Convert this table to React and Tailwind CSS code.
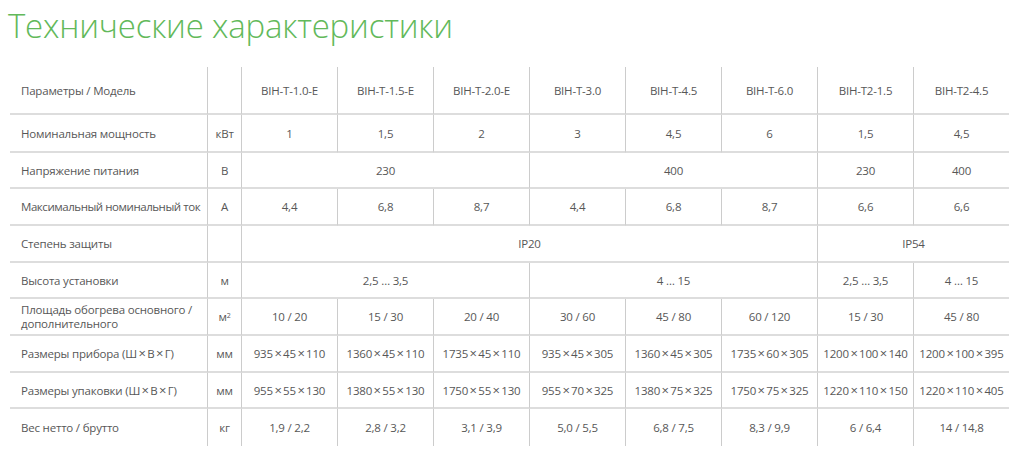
import React from 'react';

const models = ['BIH-T-1.0-E', 'BIH-T-1.5-E', 'BIH-T-2.0-E', 'BIH-T-3.0', 'BIH-T-4.5', 'BIH-T-6.0', 'BIH-T2-1.5', 'BIH-T2-4.5'];

const X = () => <span className="text-[13px] px-[1.5px]">×</span>;
const dims = (a, b, c) => <>{a}<X />{b}<X />{c}</>;

// each value: [text, colSpan]
const rows = [
  { label: 'Номинальная мощность', unit: 'кВт', cells: [['1'], ['1,5'], ['2'], ['3'], ['4,5'], ['6'], ['1,5'], ['4,5']] },
  { label: 'Напряжение питания', unit: 'В', cells: [['230', 3], ['400', 3], ['230'], ['400']] },
  { label: 'Максимальный номинальный ток', tight: true, unit: 'А', cells: [['4,4'], ['6,8'], ['8,7'], ['4,4'], ['6,8'], ['8,7'], ['6,6'], ['6,6']] },
  { label: 'Степень защиты', unit: '', cells: [['IP20', 6], ['IP54', 2]] },
  { label: 'Высота установки', unit: 'м', cells: [['2,5 … 3,5', 3], ['4 … 15', 3], ['2,5 … 3,5'], ['4 … 15']] },
  { label: <span className="leading-[14px]">Площадь обогрева основного /<br />дополнительного</span>, unit: 'м²', cells: [['10 / 20'], ['15 / 30'], ['20 / 40'], ['30 / 60'], ['45 / 80'], ['60 / 120'], ['15 / 30'], ['45 / 80']] },
  { label: <>Размеры прибора (Ш<X />В<X />Г)</>, unit: 'мм', cells: [[dims(935, 45, 110)], [dims(1360, 45, 110)], [dims(1735, 45, 110)], [dims(935, 45, 305)], [dims(1360, 45, 305)], [dims(1735, 60, 305)], [dims(1200, 100, 140)], [dims(1200, 100, 395)]] },
  { label: <>Размеры упаковки (Ш<X />В<X />Г)</>, unit: 'мм', cells: [[dims(955, 55, 130)], [dims(1380, 55, 130)], [dims(1750, 55, 130)], [dims(955, 70, 325)], [dims(1380, 75, 325)], [dims(1750, 75, 325)], [dims(1220, 110, 150)], [dims(1220, 110, 405)]] },
  { label: 'Вес нетто / брутто', unit: 'кг', cells: [['1,9 / 2,2'], ['2,8 / 3,2'], ['3,1 / 3,9'], ['5,0 / 5,5'], ['6,8 / 7,5'], ['8,3 / 9,9'], ['6 / 6,4'], ['14 / 14,8']] },
];

const spanCls = { 1: 'col-span-1', 2: 'col-span-2', 3: 'col-span-3', 6: 'col-span-6' };

export default function App() {
  return (
    <div className="w-[1024px] h-[472px] bg-white text-[#575757] overflow-hidden" style={{ fontFamily: '"Open Sans", "Noto Sans", sans-serif' }}>
      <h1 className="pl-[8px] pt-[5px] h-[67px] text-[33px] leading-[42px] font-light text-[#62b95a] tracking-[-0.2px]">
        Технические характеристики
      </h1>

      <div className="ml-[10px] grid grid-cols-[197px_34px_repeat(8,96px)] grid-rows-[48px_38px_36px_37px_37px_36px_37px_37px_36px_37px] text-[11.5px] leading-[15px] tracking-[-0.2px]">
        {/* header */}
        <div className="flex items-center pl-[11px] border-b-2 border-[#dddddd]">Параметры / Модель</div>
        <div className="border-b-2 border-l border-[#dddddd] border-l-[#cccccc]"></div>
        {models.map(m => (
          <div key={m} className="flex items-center justify-center border-b-2 border-l border-[#dddddd] border-l-[#cccccc]">{m}</div>
        ))}

        {rows.map((r, i) => {
          const last = i === rows.length - 1;
          const b = last ? '' : 'border-b-2';
          return (
            <React.Fragment key={i}>
              <div className={`flex items-center pl-[11px] whitespace-nowrap ${r.tight ? 'tracking-[-0.45px]' : ''} ${b} border-[#dddddd]`}>
                {r.label}
              </div>
              <div className={`flex items-center justify-center ${b} border-l border-[#dddddd] border-l-[#cccccc]`}>
                {r.unit === 'м²' ? <span>м<sup className="text-[7px]">2</sup></span> : r.unit}
              </div>
              {r.cells.map(([t, s = 1], j) => (
                <div key={j} className={`${spanCls[s]} flex items-center justify-center whitespace-nowrap ${b} border-l border-[#dddddd] border-l-[#cccccc]`}>{t}</div>
              ))}
            </React.Fragment>
          );
        })}
      </div>
    </div>
  );
}
